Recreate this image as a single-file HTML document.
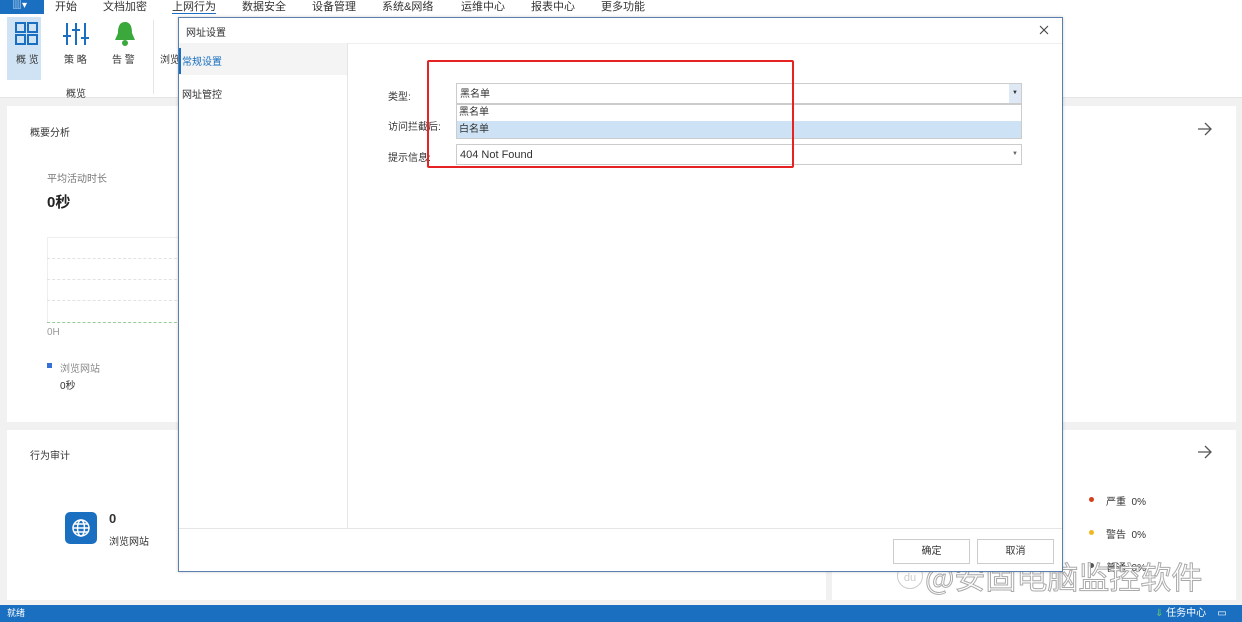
<!DOCTYPE html><html><head><meta charset="utf-8"><style>
*{margin:0;padding:0;box-sizing:border-box}
body{width:1242px;height:622px;overflow:hidden;background:#f1f1f1;font-family:"Liberation Sans","Noto Sans CJK SC",sans-serif;font-size:10px;color:#333;position:relative}
.a{position:absolute}
</style></head><body>
<div class="a" style="left:0;top:0;width:1242px;height:14px;background:#fff"></div>
<div class="a" style="left:0;top:0;width:44px;height:14px;background:#1a6fc0;color:#fff;font-size:10px;padding-left:12px;line-height:12px">▥▾</div>
<div class="a" style="top:-2px;left:55px;font-size:11px;color:#333;white-space:nowrap;word-spacing:0">
<span class="a" style="left:0">开始</span><span class="a" style="left:48px">文档加密</span><span class="a" style="left:117px">上网行为</span><span class="a" style="left:187px">数据安全</span><span class="a" style="left:257px">设备管理</span><span class="a" style="left:327px">系统&amp;网络</span><span class="a" style="left:406px">运维中心</span><span class="a" style="left:476px">报表中心</span><span class="a" style="left:546px">更多功能</span></div>
<div class="a" style="left:172px;top:13px;width:44px;height:2px;background:#1a6fc0"></div>
<div class="a" style="left:0;top:14px;width:1242px;height:84px;background:#fff;border-bottom:1px solid #e5e5e5"></div>
<div class="a" style="left:7px;top:17px;width:34px;height:63px;background:#cfe3f5"></div>
<svg class="a" style="left:14px;top:21px" width="26" height="26"><g fill="none" stroke="#1a6fc0" stroke-width="2"><rect x="2" y="2" width="9" height="9"/><rect x="14" y="2" width="9" height="9"/><rect x="2" y="14" width="9" height="9"/><rect x="14" y="14" width="9" height="9"/></g></svg>
<div class="a" style="left:16px;top:51px">概 览</div>
<svg class="a" style="left:62px;top:21px" width="28" height="26"><g stroke="#1a6fc0" stroke-width="2"><line x1="5" y1="2" x2="5" y2="24"/><line x1="14" y1="2" x2="14" y2="24"/><line x1="23" y1="2" x2="23" y2="24"/><line x1="1" y1="15" x2="9" y2="15"/><line x1="10" y1="9" x2="18" y2="9"/><line x1="19" y1="17" x2="27" y2="17"/></g></svg>
<div class="a" style="left:64px;top:51px">策 略</div>
<svg class="a" style="left:112px;top:20px" width="26" height="28"><path d="M13 2C7 2 6 8 6 13L3 20H23L20 13C20 8 19 2 13 2Z" fill="#3ba83b"/><circle cx="13" cy="23" r="3" fill="#3ba83b"/></svg>
<div class="a" style="left:112px;top:51px">告 警</div>
<div class="a" style="left:160px;top:51px">浏览</div>
<div class="a" style="left:66px;top:85px">概览</div>
<div class="a" style="left:153px;top:20px;width:1px;height:74px;background:#e5e5e5"></div>
<div class="a" style="left:7px;top:106px;width:1229px;height:316px;background:#fff"></div>
<div class="a" style="left:30px;top:124px">概要分析</div>
<div class="a" style="left:47px;top:170px;color:#777">平均活动时长</div>
<div class="a" style="left:47px;top:191px;font-size:15px;font-weight:bold;color:#222">0秒</div>
<div class="a" style="left:47px;top:237px;width:140px;height:86px;border-top:1px solid #eee;border-left:1px solid #eee"></div>
<div class="a" style="left:47px;top:258px;width:140px;border-top:1px dashed #e2e2e2"></div>
<div class="a" style="left:47px;top:279px;width:140px;border-top:1px dashed #e2e2e2"></div>
<div class="a" style="left:47px;top:300px;width:140px;border-top:1px dashed #e2e2e2"></div>
<div class="a" style="left:47px;top:322px;width:140px;border-top:1px dashed #9c9"></div>
<div class="a" style="left:47px;top:327px;color:#999">0H</div>
<div class="a" style="left:47px;top:363px;width:5px;height:5px;background:#3570d8"></div>
<div class="a" style="left:60px;top:360px;color:#888">浏览网站</div>
<div class="a" style="left:60px;top:377px">0秒</div>
<svg class="a" style="left:1197px;top:122px" width="16" height="14"><path d="M1 7H14M8 1L14 7L8 13" fill="none" stroke="#555" stroke-width="1.3"/></svg>
<div class="a" style="left:7px;top:430px;width:819px;height:170px;background:#fff"></div>
<div class="a" style="left:832px;top:430px;width:404px;height:170px;background:#fff"></div>
<div class="a" style="left:30px;top:447px">行为审计</div>
<div class="a" style="left:65px;top:512px;width:32px;height:32px;background:#1a6fc0;border-radius:5px"></div>
<svg class="a" style="left:70px;top:517px" width="22" height="22"><g fill="none" stroke="#fff" stroke-width="1.5"><circle cx="11" cy="11" r="8"/><ellipse cx="11" cy="11" rx="3.5" ry="8"/><line x1="3" y1="11" x2="19" y2="11"/><line x1="4.5" y1="7" x2="17.5" y2="7"/><line x1="4.5" y1="15" x2="17.5" y2="15"/></g></svg>
<div class="a" style="left:109px;top:511px;font-size:13px;font-weight:bold">0</div>
<div class="a" style="left:109px;top:533px">浏览网站</div>
<svg class="a" style="left:1197px;top:445px" width="16" height="14"><path d="M1 7H14M8 1L14 7L8 13" fill="none" stroke="#555" stroke-width="1.3"/></svg>
<div class="a" style="left:1089px;top:497px;width:5px;height:5px;border-radius:50%;background:#d4401c"></div>
<div class="a" style="left:1106px;top:493px">严重&nbsp; 0%</div>
<div class="a" style="left:1089px;top:530px;width:5px;height:5px;border-radius:50%;background:#f0b820"></div>
<div class="a" style="left:1106px;top:526px">警告&nbsp; 0%</div>
<div class="a" style="left:1089px;top:563px;width:5px;height:5px;border-radius:50%;background:#555"></div>
<div class="a" style="left:1106px;top:559px">普通&nbsp; 0%</div>
<div class="a" style="left:897px;top:563px;width:26px;height:26px;border-radius:50%;border:1.5px solid #ccc;color:#ccc;font-size:11px;text-align:center;line-height:28px">du</div>
<div class="a" style="left:925px;top:556px;font-size:31px;color:rgba(255,255,255,.85);-webkit-text-stroke:1px #aaa;white-space:nowrap;font-family:'Noto Sans CJK SC',sans-serif;line-height:40px">@安固电脑监控软件</div>
<div class="a" style="left:0;top:605px;width:1242px;height:17px;background:#1a6fc0;color:#fff;font-size:9px;line-height:17px;padding-left:7px">就绪</div>
<div class="a" style="left:1155px;top:605px;color:#fff;font-size:10px;line-height:17px"><span style="color:#6c6">⇓</span> 任务中心 &nbsp;&nbsp; ▭</div>
<div class="a" style="left:178px;top:17px;width:885px;height:555px;background:#fff;border:1px solid #5b7fae;box-shadow:0 0 3px rgba(0,0,0,.2)"></div>
<div class="a" style="left:186px;top:24px;color:#333">网址设置</div>
<svg class="a" style="left:1039px;top:25px" width="10" height="10"><path d="M1 1L9 9M9 1L1 9" stroke="#444" stroke-width="1.1"/></svg>
<div class="a" style="left:179px;top:43px;width:883px;height:1px;background:#eee"></div>
<div class="a" style="left:347px;top:43px;width:1px;height:486px;background:#e5e5e5"></div>
<div class="a" style="left:179px;top:43px;width:168px;height:32px;background:#f4f4f4"></div>
<div class="a" style="left:179px;top:48px;width:2px;height:26px;background:#1a6fc0"></div>
<div class="a" style="left:182px;top:53px;color:#1a6fc0">常规设置</div>
<div class="a" style="left:182px;top:86px">网址管控</div>
<div class="a" style="left:179px;top:528px;width:883px;height:1px;background:#e5e5e5"></div>
<div class="a" style="left:893px;top:539px;width:77px;height:25px;border:1px solid #ccc;text-align:center;line-height:23px">确定</div>
<div class="a" style="left:977px;top:539px;width:77px;height:25px;border:1px solid #ccc;text-align:center;line-height:23px">取消</div>
<div class="a" style="left:388px;top:88px">类型:</div>
<div class="a" style="left:388px;top:118px">访问拦截后:</div>
<div class="a" style="left:388px;top:149px">提示信息:</div>
<div class="a" style="left:456px;top:83px;width:566px;height:21px;border:1px solid #ccc;padding-left:3px;line-height:21px">黑名单</div>
<div class="a" style="left:1009px;top:84px;width:12px;height:19px;background:#dfe9f5;font-size:6px;text-align:center;line-height:19px">▼</div>
<div class="a" style="left:456px;top:104px;width:566px;height:35px;border:1px solid #ccc;background:#fff"></div>
<div class="a" style="left:457px;top:105px;padding-left:2px;line-height:16px">黑名单</div>
<div class="a" style="left:457px;top:121px;width:564px;height:17px;background:#cde3f5;padding-left:2px;line-height:17px">白名单</div>
<div class="a" style="left:456px;top:144px;width:566px;height:21px;border:1px solid #ccc;padding-left:3px;line-height:21px;font-size:11px">404 Not Found</div>
<div class="a" style="left:1012px;top:144px;font-size:6px;line-height:21px;color:#666">▼</div>
<div class="a" style="left:427px;top:60px;width:367px;height:108px;border:2px solid #e62222;border-radius:2px"></div>
</body></html>
